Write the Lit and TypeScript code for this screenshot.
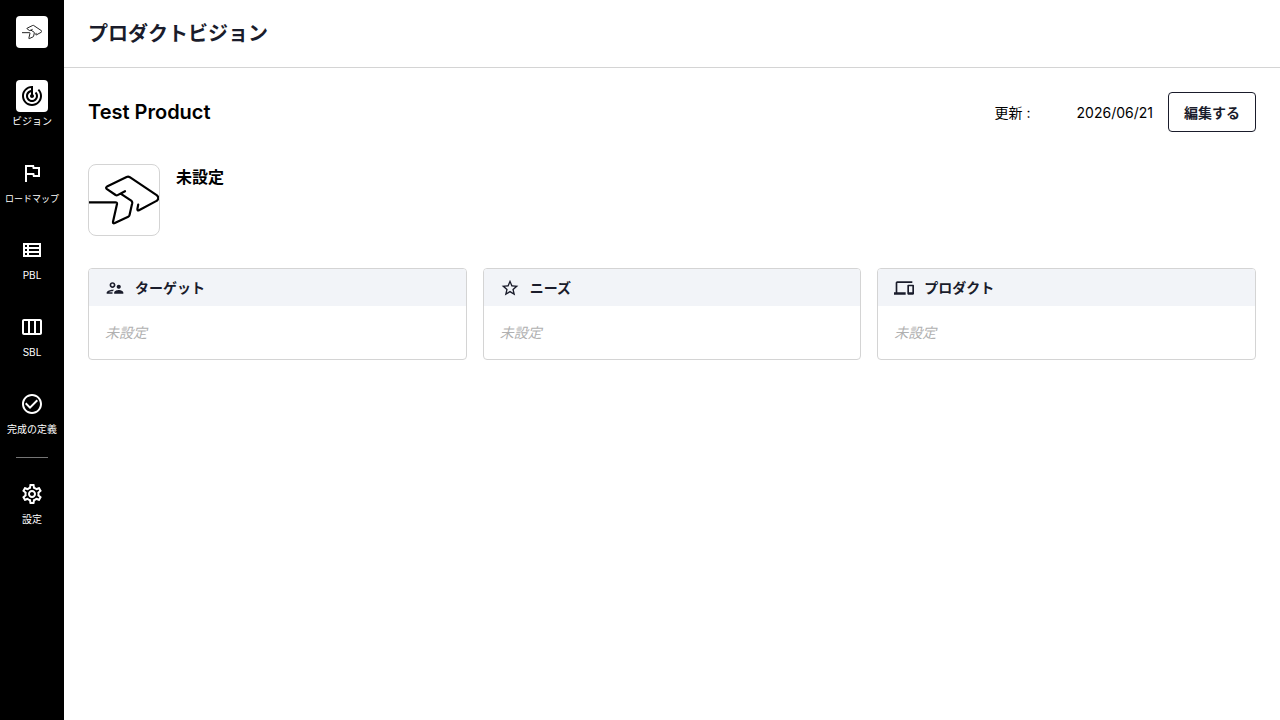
import { LitElement, html, css, svg, nothing } from "lit";
import { customElement, property } from "lit/decorators.js";

const ICONS: Record<string, string> = {
  vision:
    "M19.07 4.93l-1.41 1.41C19.1 7.79 20 9.79 20 12c0 4.42-3.58 8-8 8s-8-3.58-8-8c0-4.08 3.05-7.44 7-7.93v2.02C8.16 6.57 6 9.03 6 12c0 3.31 2.69 6 6 6s6-2.69 6-6c0-1.66-.67-3.16-1.76-4.24l-1.41 1.41C15.55 9.9 16 10.9 16 12c0 2.21-1.79 4-4 4s-4-1.79-4-4c0-1.86 1.28-3.41 3-3.86v2.14c-.6.35-1 .98-1 1.72 0 1.1.9 2 2 2s2-.9 2-2c0-.74-.4-1.38-1-1.72V2h-1C6.48 2 2 6.48 2 12s4.48 10 10 10 10-4.48 10-10c0-2.76-1.12-5.26-2.93-7.07z",
  flag: "M12.36 6l.4 2H18v6h-3.36l-.4-2H7V6h5.36M14 4H5v17h2v-7h5.6l.4 2h7V6h-5.6L14 4z",
  list: "M3 5v14h18V5H3zm4 2v2H5V7h2zm-2 6v-2h2v2H5zm0 2h2v2H5v-2zm14 2H9v-2h10v2zm0-4H9v-2h10v2zm0-4H9V7h10v2z",
  columns:
    "M20 4H4c-1.1 0-2 .9-2 2v12c0 1.1.9 2 2 2h16c1.1 0 2-.9 2-2V6c0-1.1-.9-2-2-2zM8 18H4V6h4v12zm6 0h-4V6h4v12zm6 0h-4V6h4v12z",
  check:
    "M16.59 7.58L10 14.17l-3.59-3.58L5 12l5 5 8-8zM12 2C6.48 2 2 6.48 2 12s4.48 10 10 10 10-4.48 10-10S17.52 2 12 2zm0 18c-4.42 0-8-3.58-8-8s3.58-8 8-8 8 3.58 8 8-3.58 8-8 8z",
  settings:
    "M19.43 12.98c.04-.32.07-.64.07-.98 0-.34-.03-.66-.07-.98l2.11-1.65c.19-.15.24-.42.12-.64l-2-3.46c-.09-.16-.26-.25-.44-.25-.06 0-.12.01-.17.03l-2.49 1c-.52-.4-1.08-.73-1.69-.98l-.38-2.65C14.46 2.18 14.25 2 14 2h-4c-.25 0-.46.18-.49.42l-.38 2.65c-.61.25-1.17.59-1.69.98l-2.49-1c-.06-.02-.12-.03-.18-.03-.17 0-.34.09-.43.25l-2 3.46c-.13.22-.07.49.12.64l2.11 1.65c-.04.32-.07.65-.07.98 0 .33.03.66.07.98l-2.11 1.65c-.19.15-.24.42-.12.64l2 3.46c.09.16.26.25.44.25.06 0 .12-.01.17-.03l2.49-1c.52.4 1.08.73 1.69.98l.38 2.65c.03.24.24.42.49.42h4c.25 0 .46-.18.49-.42l.38-2.65c.61-.25 1.17-.59 1.69-.98l2.49 1c.06.02.12.03.18.03.17 0 .34-.09.43-.25l2-3.46c.12-.22.07-.49-.12-.64l-2.11-1.65zm-1.98-1.71c.04.31.05.52.05.73 0 .21-.02.43-.05.73l-.14 1.13.89.7 1.08.84-.7 1.21-1.27-.51-1.04-.42-.9.68c-.43.32-.84.56-1.25.73l-1.06.43-.16 1.13-.2 1.35h-1.4l-.19-1.35-.16-1.13-1.06-.43c-.43-.18-.83-.41-1.23-.71l-.91-.7-1.06.43-1.27.51-.7-1.21 1.08-.84.89-.7-.14-1.13c-.03-.31-.05-.54-.05-.74s.02-.43.05-.73l.14-1.13-.89-.7-1.08-.84.7-1.21 1.27.51 1.04.42.9-.68c.43-.32.84-.56 1.25-.73l1.06-.43.16-1.13.2-1.35h1.39l.19 1.35.16 1.13 1.06.43c.43.18.83.41 1.23.71l.91.7 1.06-.43 1.27-.51.7 1.21-1.07.85-.89.7.14 1.13zM12 8c-2.21 0-4 1.79-4 4s1.79 4 4 4 4-1.79 4-4-1.79-4-4-4zm0 6c-1.1 0-2-.9-2-2s.9-2 2-2 2 .9 2 2-.9 2-2 2z",
  people:
    "M9 12c1.93 0 3.5-1.57 3.5-3.5S10.93 5 9 5 5.5 6.57 5.5 8.5 7.07 12 9 12zm0-5c.83 0 1.5.67 1.5 1.5S9.83 10 9 10s-1.5-.67-1.5-1.5S8.17 7 9 7zm.05 10H4.77c.99-.5 2.7-1 4.23-1 .11 0 .23.01.34.01.34-.73.93-1.33 1.64-1.81-.73-.13-1.42-.2-1.98-.2-2.34 0-7 1.17-7 3.5V19h7v-1.5c0-.17.02-.34.05-.5zm7.45-2.5c-1.84 0-5.5 1.01-5.5 3V19h11v-1.5c0-1.99-3.66-3-5.5-3zm1.21-1.82c.76-.43 1.29-1.24 1.29-2.18C19 9.12 17.88 8 16.5 8S14 9.12 14 10.5c0 .94.53 1.75 1.29 2.18.36.2.77.32 1.21.32s.85-.12 1.21-.32z",
  star: "M22 9.24l-7.19-.62L12 2 9.19 8.63 2 9.24l5.46 4.73L5.82 21 12 17.27 18.18 21l-1.63-7.03L22 9.24zM12 15.4l-3.76 2.27 1-4.28-3.32-2.88 4.38-.38L12 6.1l1.71 4.04 4.38.38-3.32 2.88 1 4.28L12 15.4z",
  devices:
    "M4 6h18V4H4c-1.1 0-2 .9-2 2v11H0v3h14v-3H4V6zm19 2h-6c-.55 0-1 .45-1 1v10c0 .55.45 1 1 1h6c.55 0 1-.45 1-1V9c0-.55-.45-1-1-1zm-1 9h-4v-7h4v7z",
};

const icon = (name: string, size: number) => html`
  <svg width=${size} height=${size} viewBox="0 0 24 24" fill="currentColor" aria-hidden="true">
    ${svg`<path d=${ICONS[name]} />`}
  </svg>
`;

const logo = (size: number, stroke = 2.2) => html`
  <svg
    width=${size}
    height=${size}
    viewBox="0 0 70 70"
    fill="none"
    stroke="#000"
    stroke-width=${stroke}
    stroke-linecap="round"
    stroke-linejoin="round"
    aria-hidden="true"
  >
    <path
      d="M0 37.3H26.5Q28.2 37.3 28 39L24 56.8Q23.8 59 25.8 58.1L39.2 51.7Q40.4 51.1 40.6 49.8L43.2 38.2Q43.5 36.6 42.2 35.7L31.6 28.6M36 26.2L28.6 30.1Q27.6 30.6 26.6 30L18 24.2Q16.2 22.8 18 21.6L37.6 12Q39.2 11.2 40.8 12.2L68 30.4Q70.6 33.2 68 35.6L50 45.3Q48.2 46 48.4 44L49.2 39.6"
    />
  </svg>
`;

@customElement("side-nav")
export class SideNav extends LitElement {
  static styles = css`
    :host {
      display: block;
      background: #000;
      color: #fff;
    }
    .nav {
      display: flex;
      flex-direction: column;
      align-items: center;
      padding-top: 16px;
    }
    .brand,
    .icon {
      display: flex;
      align-items: center;
      justify-content: center;
      width: 32px;
      height: 32px;
      border-radius: 4px;
    }
    .brand {
      background: #fff;
      margin-bottom: 32px;
    }
    .items {
      display: flex;
      flex-direction: column;
      gap: 26px;
      width: 100%;
    }
    .item {
      display: flex;
      flex-direction: column;
      align-items: center;
      color: inherit;
      text-decoration: none;
      font-size: 10px;
      line-height: 19px;
      white-space: nowrap;
    }
    .long {
      font-size: 9px;
    }
    .active .icon {
      background: #fff;
      color: #000;
    }
    .divider {
      width: 32px;
      margin: 18px 0 20px;
      border: 0;
      border-top: 1px solid #757575;
    }
  `;

  private item(name: string, label: string, active = false) {
    return html`<a
      class="item ${active ? "active" : ""}"
      href="#${name}"
      aria-current=${active ? "page" : nothing}
    >
      <span class="icon">${icon(name, 24)}</span>
      <span class=${label.length > 5 ? "long" : nothing}>${label}</span>
    </a>`;
  }

  render() {
    return html`<nav class="nav">
      <a class="brand" href="#home" aria-label="Home">${logo(20, 3)}</a>
      <div class="items">
        ${this.item("vision", "ビジョン", true)} ${this.item("flag", "ロードマップ")}
        ${this.item("list", "PBL")} ${this.item("columns", "SBL")}
        ${this.item("check", "完成の定義")}
      </div>
      <hr class="divider" />
      <div class="items">${this.item("settings", "設定")}</div>
    </nav>`;
  }
}

@customElement("vision-card")
export class VisionCard extends LitElement {
  @property() icon = "";
  @property() heading = "";
  @property() text = "";

  static styles = css`
    :host {
      display: block;
      border: 1px solid #d4d4d4;
      border-radius: 4px;
      overflow: hidden;
    }
    .head {
      display: flex;
      align-items: center;
      gap: 10px;
      padding: 8px 16px;
      background: #f2f4f8;
      color: #1a1c2b;
    }
    .title {
      margin: 0;
      font-size: 14px;
      line-height: 21px;
      font-weight: 600;
    }
    .body {
      margin: 0;
      padding: 16px;
      color: #b0b0b0;
      font-size: 14px;
      line-height: 21px;
      font-style: italic;
    }
  `;

  render() {
    return html`
      <div class="head">
        ${icon(this.icon, 20)}
        <h3 class="title">${this.heading}</h3>
      </div>
      <p class="body">${this.text}</p>
    `;
  }
}

@customElement("app-root")
export class AppRoot extends LitElement {
  static styles = css`
    :host {
      display: block;
      font-family: Inter, "Noto Sans CJK JP", sans-serif;
      color: #000;
      background: #fff;
    }
    .layout {
      display: grid;
      grid-template-columns: 64px minmax(0, 1fr);
      min-height: 100vh;
    }
    .header {
      padding: 16px 24px 15px;
      border-bottom: 1px solid #d4d4d4;
    }
    .page-title,
    .product {
      margin: 0;
      font-size: 20px;
      font-weight: 600;
    }
    .page-title {
      color: #1a1c2b;
      line-height: 36px;
    }
    .product {
      line-height: 40px;
      flex: 1;
    }
    .content {
      display: flex;
      flex-direction: column;
      gap: 32px;
      padding: 24px;
    }
    .toolbar {
      display: flex;
      align-items: center;
      font-size: 14px;
      line-height: 24px;
    }
    .updated {
      display: flex;
      gap: 46px;
      margin: 0 15px 0 0;
      padding-top: 2px;
    }
    .date {
      margin: 0;
    }
    .edit {
      height: 40px;
      padding: 2px 15px 0;
      border: 1px solid #1a1c2b;
      border-radius: 4px;
      background: #fff;
      color: #1a1c2b;
      font: inherit;
      font-weight: 600;
      cursor: pointer;
    }
    .summary {
      display: flex;
      gap: 16px;
    }
    .logo {
      display: flex;
      border: 1px solid #d4d4d4;
      border-radius: 8px;
      overflow: hidden;
    }
    .name {
      margin: 0;
      font-size: 16px;
      line-height: 26px;
      font-weight: 600;
    }
    .cards {
      display: grid;
      grid-template-columns: repeat(3, minmax(0, 1fr));
      gap: 16px;
    }
  `;

  render() {
    return html`<div class="layout" lang="ja">
      <side-nav></side-nav>
      <main>
        <header class="header"><h1 class="page-title">プロダクトビジョン</h1></header>
        <div class="content">
          <div class="toolbar">
            <h2 class="product">Test Product</h2>
            <dl class="updated">
              <dt>更新 :</dt>
              <dd class="date">2026/06/21</dd>
            </dl>
            <button class="edit" type="button">編集する</button>
          </div>
          <section class="summary">
            <div class="logo">${logo(70)}</div>
            <h2 class="name">未設定</h2>
          </section>
          <section class="cards">
            <vision-card icon="people" heading="ターゲット" text="未設定"></vision-card>
            <vision-card icon="star" heading="ニーズ" text="未設定"></vision-card>
            <vision-card icon="devices" heading="プロダクト" text="未設定"></vision-card>
          </section>
        </div>
      </main>
    </div>`;
  }
}
